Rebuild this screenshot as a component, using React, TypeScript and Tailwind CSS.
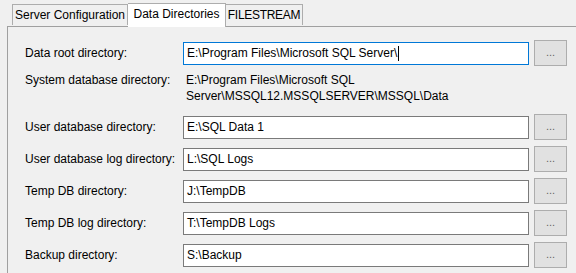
import React from "react";

const FONT = "font-['Segoe_UI','Liberation_Sans',Arial,sans-serif]";

type Row = { label: string; value: string; focused?: boolean };

const rows: Row[] = [
  { label: "User database directory:", value: "E:\\SQL Data 1" },
  { label: "User database log directory:", value: "L:\\SQL Logs" },
  { label: "Temp DB directory:", value: "J:\\TempDB" },
  { label: "Temp DB log directory:", value: "T:\\TempDB Logs" },
  { label: "Backup directory:", value: "S:\\Backup" },
];

function BrowseButton() {
  return (
    <button className="w-[33px] h-[26px] ml-[5px] border border-[#adadad] bg-[#e1e1e1] text-[#666] text-[11px] leading-none flex items-end justify-center pb-[7px]">
      ...
    </button>
  );
}

function PathRow({ label, value, focused }: Row) {
  return (
    <div className="flex items-center h-[26px]">
      <div className="w-[158px] shrink-0 whitespace-nowrap">{label}</div>
      <div
        className={`w-[346px] h-[23px] border bg-white flex items-center pl-[3px] whitespace-nowrap ${
          focused ? "border-[#0078d7]" : "border-[#7a7a7a]"
        }`}
      >
        <span>{value}</span>
        {focused && <span className="w-px h-[15px] bg-black ml-px" />}
      </div>
      <BrowseButton />
    </div>
  );
}

export default function App() {
  return (
    <div className={`w-[576px] h-[273px] overflow-hidden bg-[#f0f0f0] text-[12px] leading-[16px] text-black ${FONT}`}>
      {/* Tabs */}
      <div className="flex items-end h-[26px] pl-[12px] whitespace-nowrap">
        <div className="w-[116px] h-[21px] border border-b-0 border-[#adadad] bg-[#f0f0f0] flex items-center justify-center mb-[1px]">
          Server Configuration
        </div>
        <div className="w-[98px] h-[24px] border border-b-0 border-l-0 border-[#adadad] bg-white flex items-center justify-center pb-[3px] relative z-10 -mb-[1px]">
          Data Directories
        </div>
        <div className="w-[77px] h-[21px] border border-b-0 border-l-0 border-[#adadad] bg-[#f0f0f0] flex items-center justify-center mb-[1px] tracking-[-0.3px]">
          FILESTREAM
        </div>
      </div>

      {/* Panel */}
      <div className="ml-[7px] border-l border-t border-[#a0a0a0] h-[260px] pl-[17px] pt-[13px]">
        <PathRow label="Data root directory:" value={"E:\\Program Files\\Microsoft SQL Server\\"} focused />

        <div className="flex mt-[6px]">
          <div className="w-[158px] shrink-0 whitespace-nowrap">System database directory:</div>
          <div className="pl-[3px]">
            E:\Program Files\Microsoft SQL
            <br />
            Server\MSSQL12.MSSQLSERVER\MSSQL\Data
          </div>
        </div>

        <div className="flex flex-col gap-[6px] mt-[10px]">
          {rows.map((r) => (
            <PathRow key={r.label} {...r} />
          ))}
        </div>
      </div>
    </div>
  );
}
